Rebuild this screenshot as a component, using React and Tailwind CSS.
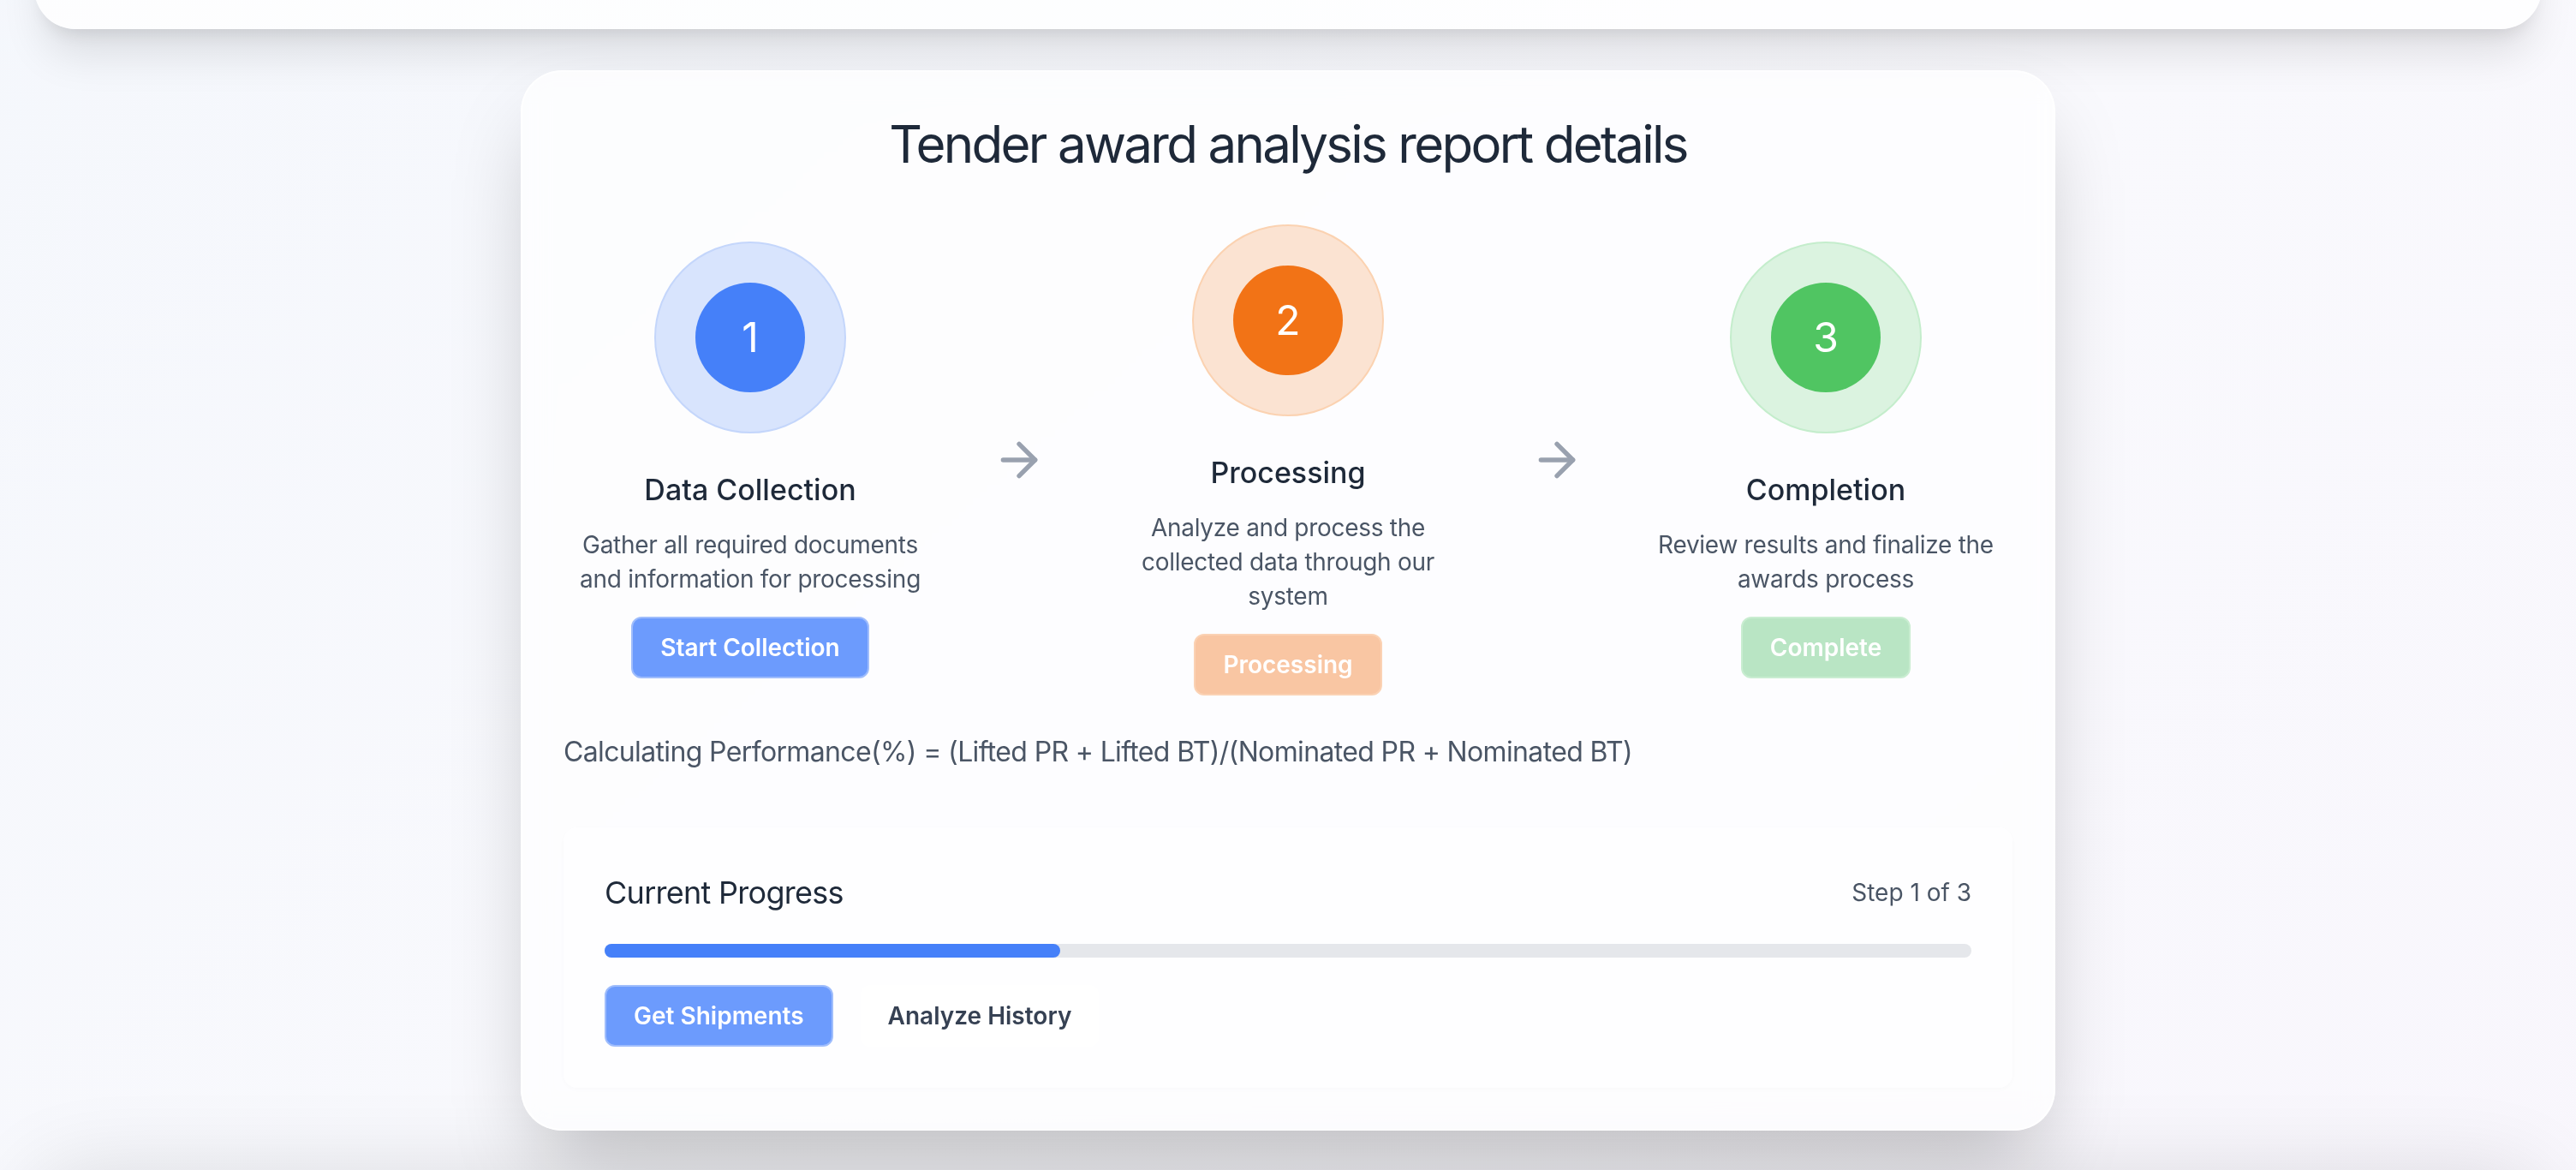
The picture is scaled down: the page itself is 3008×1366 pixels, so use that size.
import React from "react";
import { ArrowRight } from "lucide-react";

const steps = [
  {
    n: 1,
    title: "Data Collection",
    desc: "Gather all required documents and information for processing",
    btn: "Start Collection",
    outer: "bg-[#d8e4fd] border-[#c4d6fb]",
    inner: "bg-[#4580f9]",
    button: "bg-[#6c9bfd] border-[#9fbdfc]",
  },
  {
    n: 2,
    title: "Processing",
    desc: "Analyze and process the collected data through our system",
    btn: "Processing",
    outer: "bg-[#fbe3d2] border-[#fbd2b1]",
    inner: "bg-[#f27316]",
    button: "bg-[#f9c6a3] border-[#fbd2b4]",
  },
  {
    n: 3,
    title: "Completion",
    desc: "Review results and finalize the awards process",
    btn: "Complete",
    outer: "bg-[#dbf3e0] border-[#c4edcc]",
    inner: "bg-[#50c562]",
    button: "bg-[#b9e5c4] border-[#c9edd1]",
  },
];

function Step({ s }) {
  return (
    <div className="flex w-[218px] flex-col items-center text-center">
      <div
        className={`flex h-28 w-28 items-center justify-center rounded-full border ${s.outer}`}
      >
        <div
          className={`flex h-16 w-16 items-center justify-center rounded-full text-2xl text-white ${s.inner}`}
        >
          {s.n}
        </div>
      </div>
      <h3 className="mt-[19px] text-[17px] leading-7 font-medium text-gray-800">{s.title}</h3>
      <p className="mt-2 max-w-[206px] text-sm leading-5 tracking-[-0.01em] text-gray-600">
        {s.desc}
      </p>
      <button
        className={`mt-3 rounded-md border px-4 py-[7px] text-sm leading-5 font-semibold text-white ${s.button}`}
      >
        {s.btn}
      </button>
    </div>
  );
}

function Arrow() {
  return <ArrowRight className="h-8 w-8 shrink-0 text-gray-400" strokeWidth={2} />;
}

export default function App() {
  return (
    <div className="[zoom:2] w-[1504px] min-h-[1100px] bg-linear-to-br from-[#f4f7fc] via-[#f9f9fd] to-[#f8f5fc] px-5 pb-10 font-['Inter',sans-serif]">
      <div className="-mt-[183px] h-[200px] rounded-3xl bg-white/80 shadow-xl" />

      <div className="mx-auto mt-6 max-w-4xl rounded-3xl border border-white/70 bg-white/70 p-6 shadow-2xl backdrop-blur">
        <h1 className="text-center text-3xl tracking-[-0.045em] text-gray-800">
          Tender award analysis report details
        </h1>

        <div className="mt-[29px] flex items-center justify-between">
          <Step s={steps[0]} />
          <Arrow />
          <Step s={steps[1]} />
          <Arrow />
          <Step s={steps[2]} />
        </div>

        <p className="mt-[21px] text-base tracking-[-0.02em] text-gray-600">
          Calculating Performance(%) = (Lifted PR + Lifted BT)/(Nominated PR + Nominated BT)
        </p>

        <div className="mt-8 rounded-lg bg-white/50 p-6 shadow-[0_1px_3px_rgba(0,0,0,0.02)]">
          <div className="mb-4 flex items-center justify-between">
            <h2 className="text-lg tracking-[-0.02em] text-gray-800">Current Progress</h2>
            <span className="text-sm text-gray-600">Step 1 of 3</span>
          </div>
          <div className="h-2 w-full rounded-full bg-gray-200">
            <div className="h-2 w-1/3 rounded-full bg-[#4580f9]" />
          </div>
          <div className="mt-4 flex gap-4">
            <button className="rounded-md border border-[#9fbdfc] bg-[#6c9bfd] px-4 py-[7px] text-sm leading-5 font-semibold text-white">
              Get Shipments
            </button>
            <button className="rounded-md bg-white/70 px-4 py-[7px] text-sm leading-5 font-semibold text-gray-700">
              Analyze History
            </button>
          </div>
        </div>
      </div>

      <div className="mt-6 h-[400px] rounded-3xl bg-white/80 shadow-[0_0_50px_rgba(0,0,0,0.12)]" />
    </div>
  );
}
